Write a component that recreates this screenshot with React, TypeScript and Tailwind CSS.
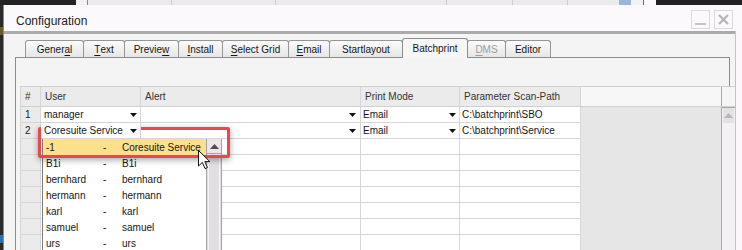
import React from "react";

const tabs = [
  { label: "General", u: 5, w: 59 },
  { label: "Text", u: 0, w: 42 },
  { label: "Preview", u: 6, w: 55 },
  { label: "Install", u: 0, w: 45 },
  { label: "Select Grid", u: 0, w: 67 },
  { label: "Email", u: 0, w: 42 },
  { label: "Startlayout", u: -1, w: 74 },
  { label: "Batchprint", u: -1, w: 66, active: true },
  { label: "DMS", u: 0, w: 39, disabled: true },
  { label: "Editor", u: -1, w: 46 },
];

const rows = [
  { n: "1", user: "manager", mode: "Email", path: "C:\\batchprint\\SBO" },
  { n: "2", user: "Coresuite Service", mode: "Email", path: "C:\\batchprint\\Service" },
];

const users = [
  ["-1", "Coresuite Service"],
  ["B1i", "B1i"],
  ["bernhard", "bernhard"],
  ["hermann", "hermann"],
  ["karl", "karl"],
  ["samuel", "samuel"],
  ["urs", "urs"],
];

function Caret() {
  return (
    <svg width="7" height="4" viewBox="0 0 7 4" className="shrink-0">
      <polygon points="0,0 7,0 3.5,4" fill="#111" />
    </svg>
  );
}

function TabLabel({ label, u }: { label: string; u: number }) {
  if (u < 0) return <>{label}</>;
  return (
    <>
      {label.slice(0, u)}
      <span className="underline underline-offset-2">{label[u]}</span>
      {label.slice(u + 1)}
    </>
  );
}

function Cell({
  w,
  children,
  className = "",
}: {
  w: string;
  children?: React.ReactNode;
  className?: string;
}) {
  return (
    <div className={`${w} h-full shrink-0 border-r border-[#d6d6d6] flex items-center ${className}`}>
      {children}
    </div>
  );
}

export default function App() {
  const empty = Array.from({ length: 7 });
  return (
    <div className="w-[742px] h-[250px] overflow-hidden bg-[#252525] flex flex-col font-[Liberation_Sans,Arial,sans-serif] text-[#161616]">
      {/* window behind */}
      <div className="h-[5px] flex shrink-0">
        <div className="w-[76px] bg-[#232323]" />
        <div className="w-[12px] bg-[#f2f2f2] border-r border-[#8a8a8a]" />
        <div className="w-[84px] bg-[#ebebeb] border-r border-[#cdcdcd]" />
        <div className="w-[104px] bg-[#ebebeb] border-r border-[#cdcdcd]" />
        <div className="w-[171px] bg-[#ebebeb] border-r border-[#cdcdcd]" />
        <div className="w-[66px] bg-[#ebebeb] border-r border-[#cdcdcd]" />
        <div className="w-[55px] bg-[#ebebeb] border-r border-[#cdcdcd]" />
        <div className="w-[51px] bg-[#ebebeb]" />
        <div className="w-[12px] bg-[#9bb6dc]" />
        <div className="w-[13px] bg-[#f2f2f2] border-r border-[#6a6a6a]" />
        <div className="w-[12px] bg-[#fafafa]" />
        <div className="flex-1 bg-[#222]" />
      </div>

      <div className="flex-1 flex">
        <div className="w-[3px] bg-[#2a2a2a] flex flex-col">
          <div className="h-[22px]" />
          <div className="h-[8px] bg-[#6b5a2a]" />
          <div className="flex-1" />
          <div className="h-[8px] bg-[#2f6fb0]" />
          <div className="h-[8px]" />
        </div>

        {/* window */}
        <div className="flex-1 flex flex-col border-l border-[#8a8a8a] bg-[#fcf9fc]">
          {/* title bar */}
          <div className="h-[26px] shrink-0 flex items-center pl-[12px] pr-[9px]">
            <span className="text-[12px] text-[#222] flex-1 pt-[6px]">Configuration</span>
            <div className="flex gap-[4px] mt-[2px]">
              <div className="w-[19px] h-[19px] border border-[#dadada] flex items-end justify-center pb-[3px]">
                <div className="w-[11px] h-[2px] bg-[#c4c4c4]" />
              </div>
              <div className="w-[19px] h-[19px] border border-[#dadada] flex items-center justify-center">
                <svg width="11" height="11" viewBox="0 0 11 11">
                  <path d="M1 1 L10 10 M10 1 L1 10" stroke="#b4b4b4" strokeWidth="2.2" />
                </svg>
              </div>
            </div>
          </div>

          <div className="flex-1 flex">
            <div className="w-[731px] flex flex-col">
              <div className="h-[3px] bg-[#ababab] shrink-0" />
              {/* body */}
              <div className="flex-1 bg-[#f4f4f4] pt-[4px] flex flex-col">
                {/* tabs */}
                <div className="h-[20px] pl-[21px] flex items-end relative z-10 -mb-px shrink-0">
                  {tabs.map((t, i) =>
                    t.active ? (
                      <div
                        key={t.label}
                        className={`${i ? "-ml-px" : ""} h-[20px] border-t border-l border-r border-[#8e8e8e] rounded-t-[3px] bg-[#f6f6f6] flex items-center justify-center text-[10px] pb-[1px] relative z-10`}
                        style={{ width: t.w }}
                      >
                        <TabLabel label={t.label} u={t.u} />
                      </div>
                    ) : (
                      <div
                        key={t.label}
                        className={`${i ? "-ml-px" : ""} h-[17px] mb-px border-t border-l border-r border-[#959595] rounded-t-[3px] bg-gradient-to-b from-[#fbfbfb] to-[#e6e6e6] flex items-center justify-center text-[10px] ${t.disabled ? "text-[#9c9c9c]" : ""}`}
                        style={{ width: t.w }}
                      >
                        <TabLabel label={t.label} u={t.u} />
                      </div>
                    )
                  )}
                </div>

                {/* panel */}
                <div className="flex-1 ml-[11px] flex flex-col">
                  <div className="h-[29px] w-[715px] shrink-0 border-t border-l border-r border-[#8c8c8c]" />
                  <div className="flex-1 border-l border-[#8c8c8c] pl-[4px]">
                    {/* grid */}
                    <div className="relative w-[715px] text-[10px]">
                      <div className="h-[21px] flex border-t border-b border-[#d0d0d0] bg-[#ebebeb] text-[#333]">
                        <Cell w="w-[21px] border-l" className="pl-[4px]">#</Cell>
                        <Cell w="w-[100px]" className="pl-[4px]">User</Cell>
                        <Cell w="w-[220px]" className="pl-[4px]">Alert</Cell>
                        <Cell w="w-[99px]" className="pl-[4px]">Print Mode</Cell>
                        <Cell w="w-[121px]" className="pl-[4px]">Parameter Scan-Path</Cell>
                        <div className="w-[141px] h-full bg-[#f7f7f7] border-r border-[#a8a8a8]" />
                        <div className="w-[13px] h-full bg-[#f5f5f5]" />
                      </div>
                      <div className="flex">
                        <div className="flex flex-col">
                          {rows.map((r, idx) => (
                            <div key={r.n} className="h-[16px] flex border-b border-[#d6d6d6]">
                              <Cell w="w-[21px] border-l bg-[#ebebeb]" className="pl-[4px]">{r.n}</Cell>
                              <Cell
                                w={`w-[100px] bg-white ${idx === 1 ? "relative z-20" : ""}`}
                                className="pl-[3px] pr-[3px] justify-between"
                              >
                                <span className="whitespace-nowrap">{r.user}</span>
                                <Caret />
                              </Cell>
                              <Cell w="w-[220px] bg-white" className="justify-end pr-[4px]">
                                <Caret />
                              </Cell>
                              <Cell w="w-[99px] bg-white" className="pl-[2px] pr-[3px] justify-between">
                                <span>{r.mode}</span>
                                <Caret />
                              </Cell>
                              <Cell w="w-[121px] bg-white" className="pl-[2px]">
                                <span className="whitespace-nowrap">{r.path}</span>
                              </Cell>
                            </div>
                          ))}
                          {empty.map((_, i) => (
                            <div key={i} className="h-[16px] flex border-b border-[#d6d6d6]">
                              <Cell w="w-[21px] border-l bg-[#ebebeb]" />
                              <Cell w="w-[100px] bg-white" />
                              <Cell w="w-[220px] bg-white" />
                              <Cell w="w-[99px] bg-white" />
                              <Cell w="w-[121px] bg-white" />
                            </div>
                          ))}
                        </div>
                        <div className="w-[141px] bg-[#e6e6e6] border-r border-[#a8a8a8]" />
                        <div className="w-[13px] flex flex-col bg-[#f3f1f3] border-t border-[#a8a8a8]">
                          <div className="h-[15px] mx-[1px] bg-[#e4e1e4] flex items-center justify-center">
                            <svg width="9" height="5" viewBox="0 0 9 5">
                              <polygon points="0,5 9,5 4.5,0" fill="#b8b8b8" />
                            </svg>
                          </div>
                        </div>
                      </div>

                      {/* dropdown */}
                      <div className="absolute z-[5] left-[22px] top-[53px] w-[180px] h-[120px] flex bg-white">
                        <div className="w-[164px] border-l border-[#7c7c7c] flex flex-col">
                          {users.map(([a, b], i) => (
                            <div
                              key={a}
                              className={`h-[16px] shrink-0 flex items-center whitespace-nowrap ${i === 0 ? "bg-[#fde08c]" : ""}`}
                            >
                              <span className="w-[60px] pl-[3px]">{a}</span>
                              <span className="w-[19px]">-</span>
                              <span>{b}</span>
                            </div>
                          ))}
                        </div>
                        <div className="w-[16px] flex flex-col border-l border-r border-[#a4a4a4] bg-[#e2dfe2]">
                          <div className="h-[15px] border-b border-[#a4a4a4] bg-[#e9e6e9] flex items-center justify-center">
                            <svg width="9" height="5" viewBox="0 0 9 5">
                              <polygon points="0,5 9,5 4.5,0" fill="#4e4e4e" />
                            </svg>
                          </div>
                          <div className="flex-1 mx-[1px] border-l border-r border-[#f4f2f4]" />
                        </div>
                      </div>

                      {/* highlight */}
                      <div className="absolute z-10 left-[18px] top-[41px] w-[192px] h-[31px] border-[3px] border-[#ea464b] rounded-[2px] shadow-[0_2px_6px_rgba(0,0,0,0.35)]" />

                      {/* cursor */}
                      <svg className="absolute z-30 left-[178px] top-[64px]" width="13" height="20" viewBox="0 0 13 20">
                        <path
                          d="M0.5 0.5 L0.5 16 L4.3 12.4 L7 18.6 L9.4 17.6 L6.8 11.6 L11.8 11.6 Z"
                          fill="#fff"
                          stroke="#111"
                          strokeWidth="1"
                          strokeLinejoin="round"
                        />
                      </svg>
                    </div>
                  </div>
                </div>
              </div>
            </div>
            <div className="flex-1 border-l border-[#c4c4c4] bg-[#fbf7fb]" />
          </div>
        </div>
      </div>
    </div>
  );
}
